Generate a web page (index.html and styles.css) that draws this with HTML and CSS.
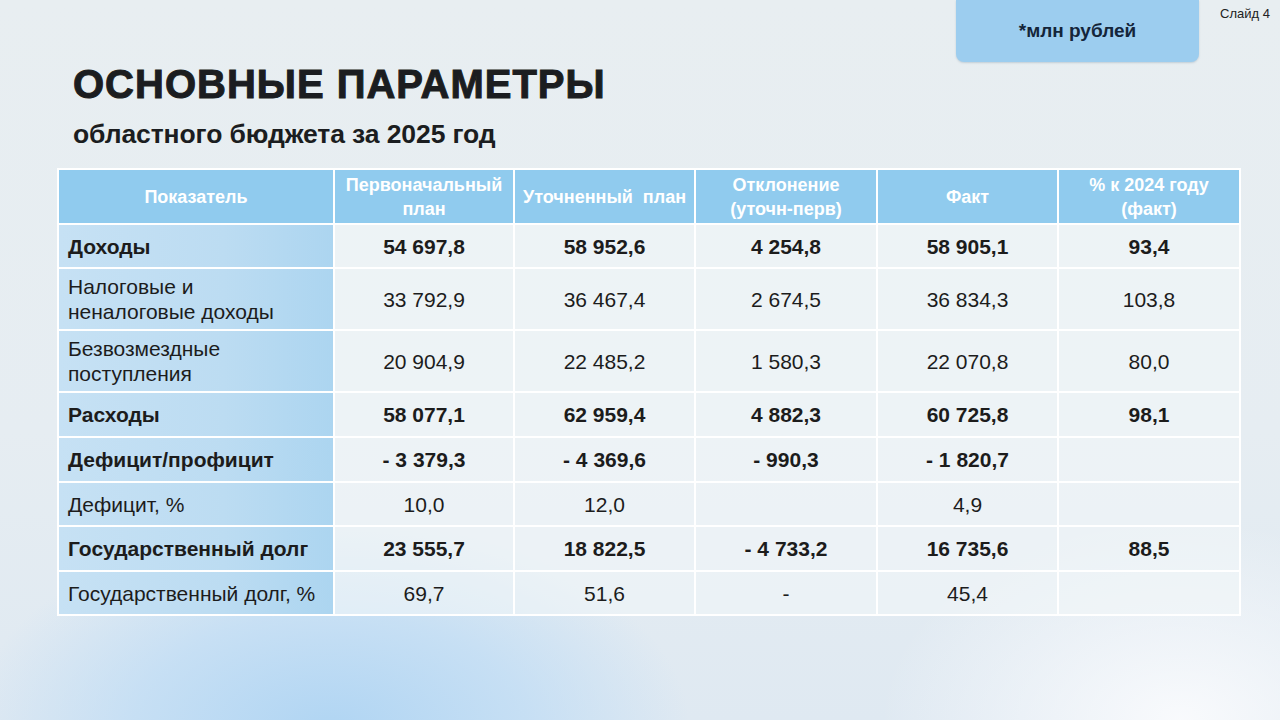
FILE: index.html
```html
<!DOCTYPE html>
<html lang="ru">
<head>
<meta charset="utf-8">
<link rel="stylesheet" href="styles.css">
</head>
<body>
<div class="slide">
  <div class="topbar">
    <div class="unit">*млн рублей</div>
    <div class="slideno">Слайд 4</div>
  </div>
  <h1 class="title">ОСНОВНЫЕ ПАРАМЕТРЫ</h1>
  <h2 class="subtitle">областного бюджета за 2025 год</h2>
  <table class="budget">
    <colgroup>
      <col class="c1"><col class="c2"><col class="c3"><col class="c4"><col class="c5"><col class="c6">
    </colgroup>
    <thead>
      <tr class="head">
        <th>Показатель</th>
        <th>Первоначальный<br>план</th>
        <th>Уточненный&nbsp; план</th>
        <th>Отклонение<br>(уточн-перв)</th>
        <th>Факт</th>
        <th>% к 2024 году<br>(факт)</th>
      </tr>
    </thead>
    <tbody>
      <tr class="bold r44"><td>Доходы</td><td>54 697,8</td><td>58 952,6</td><td>4 254,8</td><td>58 905,1</td><td>93,4</td></tr>
      <tr class="r62"><td>Налоговые и<br>неналоговые доходы</td><td>33 792,9</td><td>36 467,4</td><td>2 674,5</td><td>36 834,3</td><td>103,8</td></tr>
      <tr class="r62"><td>Безвозмездные<br>поступления</td><td>20 904,9</td><td>22 485,2</td><td>1 580,3</td><td>22 070,8</td><td>80,0</td></tr>
      <tr class="bold r45"><td>Расходы</td><td>58 077,1</td><td>62 959,4</td><td>4 882,3</td><td>60 725,8</td><td>98,1</td></tr>
      <tr class="bold r45"><td>Дефицит/профицит</td><td>- 3 379,3</td><td>- 4 369,6</td><td>- 990,3</td><td>- 1 820,7</td><td></td></tr>
      <tr class="r44"><td>Дефицит, %</td><td>10,0</td><td>12,0</td><td></td><td>4,9</td><td></td></tr>
      <tr class="bold r45"><td>Государственный долг</td><td>23 555,7</td><td>18 822,5</td><td>- 4 733,2</td><td>16 735,6</td><td>88,5</td></tr>
      <tr class="r44"><td>Государственный долг, %</td><td>69,7</td><td>51,6</td><td>-</td><td>45,4</td><td></td></tr>
    </tbody>
  </table>
</div>
</body>
</html>
```
FILE: styles.css
```css
html, body {
  margin: 0;
  padding: 0;
}
body {
  width: 1280px;
  height: 720px;
  overflow: hidden;
  font-family: "Liberation Sans", Arial, sans-serif;
}
.slide {
  width: 1280px;
  height: 720px;
  overflow: hidden;
  box-sizing: border-box;
  background:
    radial-gradient(ellipse 360px 210px at 330px 730px, rgba(176, 213, 243, 1) 0%, rgba(188, 219, 245, 0.7) 55%, rgba(200, 225, 245, 0) 100%),
    radial-gradient(ellipse 300px 200px at 1180px 720px, rgba(250, 251, 253, 0.95) 0%, rgba(250, 251, 253, 0) 100%),
    linear-gradient(180deg, #e8eef1 0%, #e6edf2 60%, #dfe9f2 100%);
  padding: 0 0 0 57px;
  display: flex;
  flex-direction: column;
}
.topbar {
  display: flex;
  justify-content: flex-end;
  align-items: flex-start;
  height: 62px;
}
.unit {
  width: 243px;
  height: 62px;
  background: #9ccdef;
  border-radius: 0 0 8px 8px;
  display: flex;
  align-items: center;
  justify-content: center;
  font-weight: bold;
  font-size: 19px;
  color: #14253a;
  box-shadow: 0 1px 2px rgba(80, 110, 140, 0.25);
}
.slideno {
  width: 81px;
  padding: 6px 10px 0 0;
  box-sizing: border-box;
  text-align: right;
  font-size: 13px;
  color: #222;
}
.title {
  margin: 0 0 0 16px;
  font-size: 40px;
  font-weight: bold;
  color: #1b1d20;
  letter-spacing: 1px;
  line-height: 44px;
  -webkit-text-stroke: 1px #1b1d20;
}
.subtitle {
  margin: 13px 0 0 16px;
  font-size: 26.5px;
  font-weight: bold;
  color: #1b1d20;
  line-height: 30px;
  letter-spacing: -0.1px;
}
.budget {
  margin-top: 19px;
  width: 1182px;
  border-collapse: collapse;
  table-layout: fixed;
  font-size: 21px;
  color: #1c1c1c;
}
.c1 { width: 276px; }
.c2 { width: 180px; }
.c3 { width: 181px; }
.c4 { width: 182px; }
.c5 { width: 181px; }
.c6 { width: 182px; }
.budget th, .budget td {
  border: 2px solid #ffffff;
  text-align: center;
  padding: 0;
}
.head th {
  height: 53px;
  background: #90cbee;
  color: #ffffff;
  font-weight: bold;
  font-size: 18px;
  line-height: 24px;
}
.budget td {
  background: rgba(242, 246, 249, 0.6);
  line-height: 25px;
}
.budget td:first-child {
  text-align: left;
  padding-left: 9px;
  background: linear-gradient(90deg, #c6e1f4 0%, #bcdcf2 60%, #acd5f0 100%);
}
.bold td { font-weight: bold; }
.r44 td { height: 42px; }
.r45 td { height: 43px; }
.r62 td { height: 60px; }
```
